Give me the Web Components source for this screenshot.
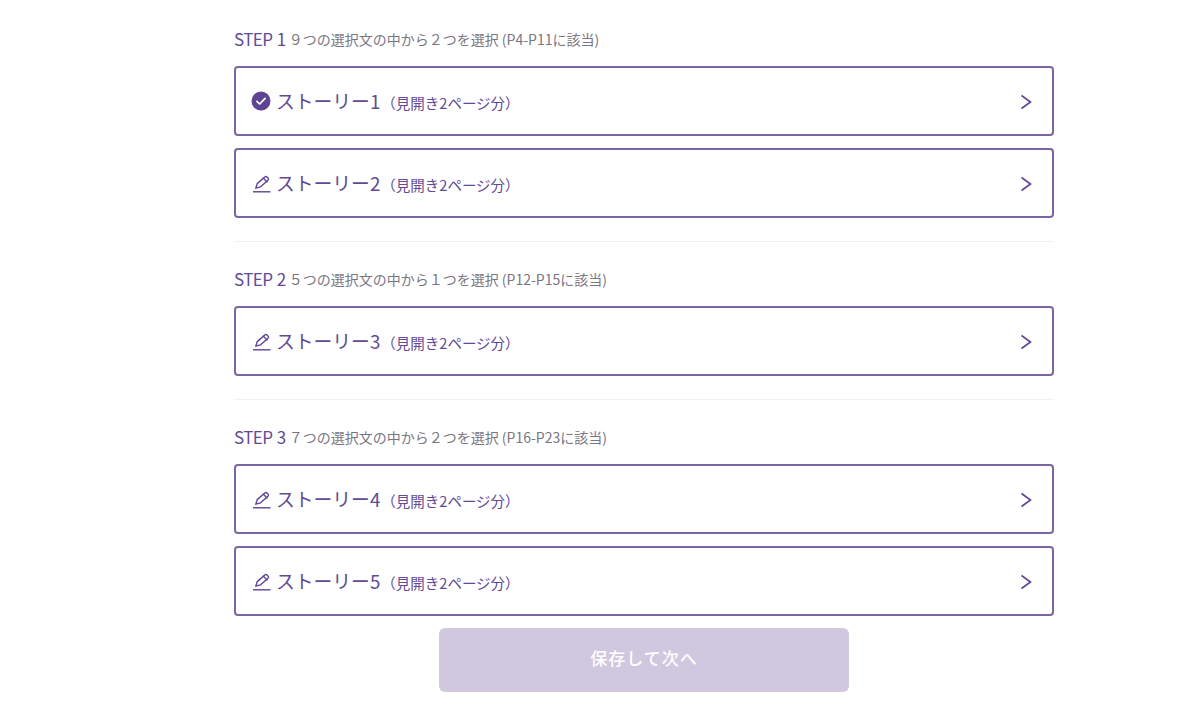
<!DOCTYPE html>
<html lang="ja">
<head>
<meta charset="utf-8">
<title>ストーリー選択</title>
<style>
  html, body { margin: 0; padding: 0; background: #FFFFFF; }
  body { font-family: 'Noto Sans CJK JP', 'Noto Sans', sans-serif; overflow: hidden; }
</style>
</head>
<body>
<story-page>
  <step-section step="STEP 1" desc="９つの選択文の中から２つを選択 (P4-P11に該当)">
    <story-card title="ストーリー1" done></story-card>
    <story-card title="ストーリー2"></story-card>
  </step-section>
  <step-section step="STEP 2" desc="５つの選択文の中から１つを選択 (P12-P15に該当)">
    <story-card title="ストーリー3"></story-card>
  </step-section>
  <step-section step="STEP 3" desc="７つの選択文の中から２つを選択 (P16-P23に該当)" last>
    <story-card title="ストーリー4"></story-card>
    <story-card title="ストーリー5"></story-card>
  </step-section>
  <save-button slot="footer">保存して次へ</save-button>
</story-page>
<script>
const pageTemplate = document.createElement('template');
pageTemplate.innerHTML = `
<style>
  :host { display: block; width: 1204px; height: 720px; box-sizing: border-box; padding: 24px 0 0 234px; }
  .col { display: flex; flex-direction: column; width: 820px; }
  .footer { display: flex; justify-content: center; margin-top: 12px; }
</style>
<div class="col">
  <slot></slot>
  <div class="footer"><slot name="footer"></slot></div>
</div>
`;

class StoryPage extends HTMLElement {
  connectedCallback() {
    if (!this.shadowRoot) {
      this.attachShadow({ mode: 'open' }).appendChild(pageTemplate.content.cloneNode(true));
    }
  }
}

const sectionTemplate = document.createElement('template');
sectionTemplate.innerHTML = `
<style>
  :host { display: block; }
  .head { display: flex; align-items: center; gap: 5px; height: 30px; margin-bottom: 12px; white-space: nowrap; }
  .step { font-size: 17px; color: #634A96; letter-spacing: -0.55px; word-spacing: 1px; margin-bottom: 2px; }
  .desc { font-size: 14px; color: #7A7681; margin-left: -2px; }
  .cards { display: flex; flex-direction: column; gap: 12px; }
  hr { border: 0; height: 1px; background: #F2F1F4; margin: 23px 0 22px; }
  :host([last]) hr { display: none; }
</style>
<div class="head"><span class="step"></span><span class="desc"></span></div>
<div class="cards"><slot></slot></div>
<hr>
`;

class StepSection extends HTMLElement {
  connectedCallback() {
    if (!this.shadowRoot) {
      const root = this.attachShadow({ mode: 'open' });
      root.appendChild(sectionTemplate.content.cloneNode(true));
      root.querySelector('.step').textContent = this.getAttribute('step') || '';
      root.querySelector('.desc').textContent = this.getAttribute('desc') || '';
    }
  }
}

const checkIcon = `<svg width="20" height="20" viewBox="0 0 20 20"><circle cx="10" cy="10" r="9.5" fill="#5F4493"/><path d="M5.9 10.3l2.8 2.7 5.4-5.6" fill="none" stroke="#FFFFFF" stroke-width="1.7" stroke-linecap="round" stroke-linejoin="round"/></svg>`;
const penIcon = `<svg width="20" height="20" viewBox="0 0 20 20" fill="none" stroke="#5F4493" stroke-width="1.4" stroke-linejoin="round" stroke-linecap="round" style="overflow:visible"><path d="M4.8 15.2l1.4-4.6 7.6-6.6a1.5 1.5 0 0 1 2.2 0.1l1 1a1.5 1.5 0 0 1 0 2.1l-7.4 6.6z"/><path d="M12.4 5.3l3.6 3.6"/><path d="M2 18.8h17.5" stroke-linecap="butt"/></svg>`;

const cardTemplate = document.createElement('template');
cardTemplate.innerHTML = `
<style>
  :host { display: block; }
  .card { box-sizing: border-box; display: flex; align-items: center; height: 70px; padding: 0 19px 0 15px; background: #FFFFFF; border: 2px solid #7A66A6; border-radius: 4px; color: #634A96; }
  .icon { display: flex; width: 20px; height: 20px; margin-right: 5px; }
  .title { font-size: 18.8px; white-space: nowrap; margin-bottom: 2px; }
  .sub { font-size: 14.5px; white-space: nowrap; margin-left: 1px; margin-top: 2px; }
  .chevron { display: flex; margin-left: auto; margin-top: 1px; }
</style>
<div class="card">
  <span class="icon"></span>
  <span class="title"></span>
  <span class="sub">（見開き2ページ分）</span>
  <span class="chevron"><svg width="14" height="16" viewBox="0 0 14 16" fill="none" stroke="#5F4493" stroke-width="1.6"><path d="M2.5 1.5L11.5 8l-9 6.5"/></svg></span>
</div>
`;

class StoryCard extends HTMLElement {
  connectedCallback() {
    if (!this.shadowRoot) {
      const root = this.attachShadow({ mode: 'open' });
      root.appendChild(cardTemplate.content.cloneNode(true));
      root.querySelector('.title').textContent = this.getAttribute('title') || '';
      root.querySelector('.icon').innerHTML = this.hasAttribute('done') ? checkIcon : penIcon;
    }
  }
}

const buttonTemplate = document.createElement('template');
buttonTemplate.innerHTML = `
<style>
  :host { display: block; }
  button { display: block; width: 410px; height: 64px; padding: 0 0 6px; border: 0; border-radius: 6px; background: #D0C8DF; color: #FFFFFF; font: 500 17px 'Noto Sans CJK JP', 'Noto Sans', sans-serif; letter-spacing: 1px; }
</style>
<button disabled><slot></slot></button>
`;

class SaveButton extends HTMLElement {
  connectedCallback() {
    if (!this.shadowRoot) {
      this.attachShadow({ mode: 'open' }).appendChild(buttonTemplate.content.cloneNode(true));
    }
  }
}

customElements.define('story-page', StoryPage);
customElements.define('step-section', StepSection);
customElements.define('story-card', StoryCard);
customElements.define('save-button', SaveButton);
</script>
</body>
</html>
